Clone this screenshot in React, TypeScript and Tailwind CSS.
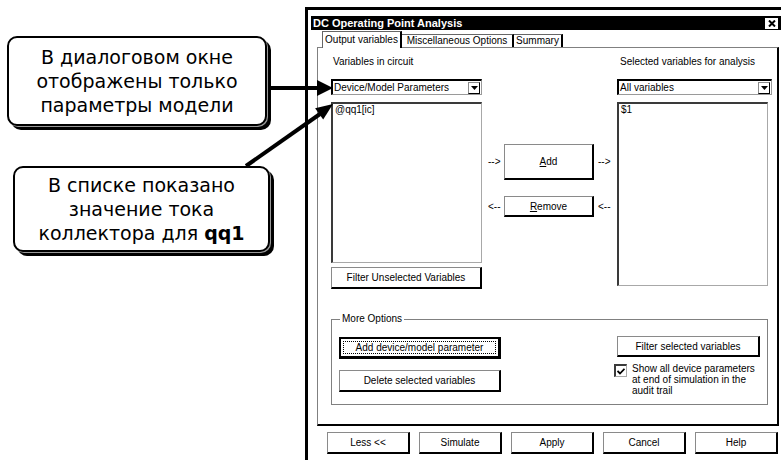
import React from "react";

function Btn({ children, className }: { children: React.ReactNode; className: string }) {
  return (
    <div
      className={
        "flex shrink-0 items-center justify-center border-l border-t border-[#8a8a8a] border-r-2 border-b-2 border-r-black border-b-black bg-white " +
        className
      }
    >
      {children}
    </div>
  );
}

function Combo({ text }: { text: string }) {
  return (
    <div className="flex h-[16px] items-center border-l-2 border-t-2 border-black border-b border-r border-b-[#9a9a9a] border-r-[#9a9a9a] bg-white pl-[1px] pr-[1px]">
      <span className="flex-1 leading-[12px]">{text}</span>
      <span className="flex h-[12px] w-[12px] items-center justify-center border-l border-t border-[#8a8a8a] border-r border-b border-r-black border-b-black bg-white">
        <svg width="7" height="4" viewBox="0 0 7 4">
          <polygon points="0,0 7,0 3.5,4" fill="#000" />
        </svg>
      </span>
    </div>
  );
}

function ListBox({ item, className }: { item: string; className: string }) {
  return (
    <div
      className={
        "border-l-2 border-t-2 border-[#3a3a3a] border-b border-r border-b-[#a8a8a8] border-r-[#a8a8a8] bg-white pl-[2px] leading-[12px] " +
        className
      }
    >
      {item}
    </div>
  );
}

function Dialog() {
  return (
    <div className="ml-[305px] mt-[7px] h-[453px] w-[476px] border-l-[3px] border-t-[3px] border-black pl-[3px] pt-[6px] font-['Liberation_Sans',Arial,sans-serif] text-[10px] text-black">
      {/* title bar */}
      <div className="flex h-[14px] items-center justify-between bg-black pl-[2px]">
        <span className="text-[11px] font-bold leading-[14px] text-white">DC Operating Point Analysis</span>
        <span className="mr-[3px] flex h-[11px] w-[13px] items-center justify-center bg-white">
          <svg width="8" height="7" viewBox="0 0 8 7">
            <path d="M1 0.5 L7 6.5 M7 0.5 L1 6.5" stroke="#000" strokeWidth="2" />
          </svg>
        </span>
      </div>

      {/* tabs */}
      <div className="flex h-[17px] items-end pl-[11px]">
        <div className="relative z-10 -mb-px flex h-[17px] w-[80px] items-center justify-center border-l border-t border-[#666] border-r-2 border-r-black bg-white pb-[1px] leading-[12px]">
          Output variables
        </div>
        <div className="flex h-[13px] w-[112px] items-center justify-center border-t border-[#666] border-r-2 border-r-black bg-white leading-[12px]">
          Miscellaneous Options
        </div>
        <div className="flex h-[13px] w-[49px] items-center justify-center border-t border-[#666] border-r-2 border-r-black bg-white leading-[12px]">
          Summary
        </div>
      </div>

      {/* panel */}
      <div className="ml-[6px] h-[379px] w-[462px] border-l border-t border-[#808080] border-r-2 border-b-2 border-r-black border-b-black pl-[13px] pt-[8px]">
        <div className="flex">
          {/* left column */}
          <div className="w-[151px] shrink-0">
            <div className="h-[12px] pl-[2px] leading-[12px]">Variables in circuit</div>
            <div className="mt-[11px]">
              <Combo text="Device/Model Parameters" />
            </div>
            <ListBox item="@qq1[ic]" className="mt-[7px] h-[161px]" />
            <Btn className="mt-[4px] h-[22px] w-[151px]">Filter Unselected Variables</Btn>
          </div>

          {/* middle column */}
          <div className="w-[135px] shrink-0 pt-[88px]">
            <div className="flex h-[36px] items-center pl-[6px]">
              <span className="w-[16px] leading-[12px]">--&gt;</span>
              <Btn className="h-[36px] w-[90px]">
                <span>
                  <span className="underline">A</span>dd
                </span>
              </Btn>
              <span className="ml-[4px] leading-[12px]">--&gt;</span>
            </div>
            <div className="mt-[16px] flex h-[21px] items-center pl-[6px]">
              <span className="w-[16px] leading-[12px]">&lt;--</span>
              <Btn className="h-[21px] w-[90px]">
                <span>
                  <span className="underline">R</span>emove
                </span>
              </Btn>
              <span className="ml-[4px] leading-[12px]">&lt;--</span>
            </div>
          </div>

          {/* right column */}
          <div className="w-[155px] shrink-0">
            <div className="h-[12px] pl-[3px] leading-[12px]">Selected variables for analysis</div>
            <div className="mt-[11px]">
              <Combo text="All variables" />
            </div>
            <ListBox item="$1" className="mt-[7px] h-[184px] w-[151px]" />
          </div>
        </div>

        {/* More options */}
        <fieldset className="mt-[24px] h-[92px] w-[437px] border border-[#808080]">
          <legend className="ml-[8px] px-[2px] leading-[12px]">More Options</legend>
          <div className="flex pl-[7px]">
            <div className="w-[162px] shrink-0 pt-[12px]">
              <div className="flex h-[22px] w-[162px] border-2 border-black border-r-[3px] border-b-[3px] bg-white p-[2px]">
                <div className="flex flex-1 items-center justify-center border border-dotted border-black leading-[12px]">
                  Add device/model parameter
                </div>
              </div>
              <Btn className="mt-[11px] h-[22px] w-[162px]">Delete selected variables</Btn>
            </div>
            <div className="ml-[113px] shrink-0 pt-[11px]">
              <Btn className="ml-[3px] h-[21px] w-[143px]">Filter selected variables</Btn>
              <div className="mt-[7px] flex items-start">
                <div className="flex h-[13px] w-[13px] shrink-0 items-center justify-center border-l-2 border-t-2 border-[#3a3a3a] border-b border-r border-b-[#a8a8a8] border-r-[#a8a8a8] bg-white">
                  <svg width="8" height="7" viewBox="0 0 8 7">
                    <path d="M0.5 3 L3 5.5 L7.5 0.8" stroke="#000" strokeWidth="1.8" fill="none" />
                  </svg>
                </div>
                <div className="ml-[5px] -mt-[1px] leading-[11px]">
                  Show all device parameters
                  <br />
                  at end of simulation in the
                  <br />
                  audit trail
                </div>
              </div>
            </div>
          </div>
        </fieldset>
      </div>

      {/* bottom buttons */}
      <div className="mt-[6px] flex gap-[9px] pl-[16px]">
        <Btn className="h-[22px] w-[83px]">Less &lt;&lt;</Btn>
        <Btn className="h-[22px] w-[83px]">Simulate</Btn>
        <Btn className="h-[22px] w-[83px]">Apply</Btn>
        <Btn className="h-[22px] w-[83px]">Cancel</Btn>
        <Btn className="h-[22px] w-[83px]">Help</Btn>
      </div>
    </div>
  );
}

export default function App() {
  return (
    <div className="relative h-[460px] w-[781px] overflow-hidden bg-white">
      <Dialog />

      {/* callout 1 */}
      <div className="absolute left-[7px] top-[36px] flex h-[90px] w-[260px] flex-col items-center justify-center rounded-[10px] border-2 border-black bg-white text-center font-['DejaVu_Sans',sans-serif] text-[19px] leading-[24px] text-black shadow-[1px_1px_0_#999,4px_4px_0_#000]">
        <div>В диалоговом окне</div>
        <div>отображены только</div>
        <div>параметры модели</div>
      </div>

      {/* callout 2 */}
      <div className="absolute left-[13px] top-[166px] flex h-[86px] w-[257px] flex-col items-center justify-center rounded-[10px] border-2 border-black bg-white text-center font-['DejaVu_Sans',sans-serif] text-[19px] leading-[24px] text-black shadow-[1px_1px_0_#999,4px_4px_0_#000]">
        <div>В списке показано</div>
        <div>значение тока</div>
        <div>
          коллектора для <span className="font-black">qq1</span>
        </div>
      </div>

      {/* arrows */}
      <svg className="pointer-events-none absolute left-0 top-0" width="781" height="460" viewBox="0 0 781 460">
        <line x1="268" y1="88" x2="320" y2="88" stroke="#000" strokeWidth="4" />
        <polygon points="333,88 317,80 317,96" fill="#000" />
        <line x1="246" y1="166" x2="320" y2="114" stroke="#000" strokeWidth="4" />
        <polygon points="333,104 323.2,119.6 315.1,108.2" fill="#000" />
      </svg>
    </div>
  );
}
